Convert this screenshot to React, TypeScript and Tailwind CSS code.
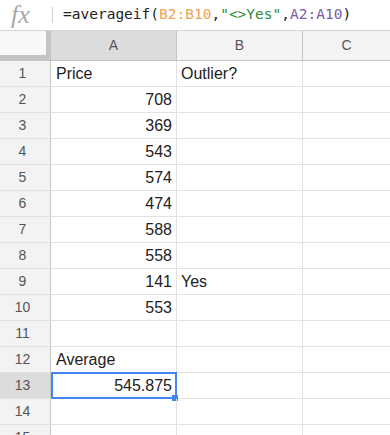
import React from "react";

const rows: { n: number; a?: string; aRight?: boolean; b?: string }[] = [
  { n: 1, a: "Price", b: "Outlier?" },
  { n: 2, a: "708", aRight: true },
  { n: 3, a: "369", aRight: true },
  { n: 4, a: "543", aRight: true },
  { n: 5, a: "574", aRight: true },
  { n: 6, a: "474", aRight: true },
  { n: 7, a: "588", aRight: true },
  { n: 8, a: "558", aRight: true },
  { n: 9, a: "141", aRight: true, b: "Yes" },
  { n: 10, a: "553", aRight: true },
  { n: 11 },
  { n: 12, a: "Average" },
  { n: 13, a: "545.875", aRight: true },
  { n: 14 },
  { n: 15 },
];

export default function App() {
  return (
    <div className="w-[390px] h-[435px] overflow-hidden bg-white font-['Liberation_Sans',Arial,sans-serif] text-[#222]">
      {/* Formula bar */}
      <div className="flex h-[31px] items-center border-b border-[#d4d4d4] bg-white">
        <div className="flex h-full w-[52px] shrink-0 items-center pl-[11px]">
          <span className="font-['Liberation_Serif',serif] text-[26px] italic leading-none text-[#a8a8a8]">
            fx
          </span>
        </div>
        <div className="h-[16px] w-px shrink-0 bg-[#cfcfcf]" />
        <div className="ml-[10px] font-['DejaVu_Sans_Mono',monospace] text-[14.5px] text-[#222] whitespace-nowrap">
          =averageif(<span className="text-[#f1a35a]">B2:B10</span>,<span className="text-[#2e8b3a]">"&lt;&gt;Yes"</span>,<span className="text-[#7e5aa8]">A2:A10</span>)
        </div>
      </div>

      {/* Column headers */}
      <div className="flex h-[30px] border-b border-[#c4c4c4] text-[14px] text-[#555]">
        <div className="w-[51px] shrink-0 border-r-[5px] border-b-[5px] border-[#c4c4c4] bg-[#f8f8f8]" />
        <div className="flex w-[126px] shrink-0 items-center justify-center border-r border-[#c4c4c4] bg-[#dcdcdc]">
          A
        </div>
        <div className="flex w-[126px] shrink-0 items-center justify-center border-r border-[#c4c4c4] bg-[#f3f3f3]">
          B
        </div>
        <div className="flex flex-1 items-center justify-center bg-[#f3f3f3]">C</div>
      </div>

      {/* Rows */}
      {rows.map((r) => (
        <div key={r.n} className="flex h-[26px] border-b border-[#e2e2e2]">
          <div
            className={`flex w-[51px] shrink-0 items-center justify-center border-r border-[#c4c4c4] pr-[5px] text-[14px] text-[#555] ${
              r.n === 13 ? "bg-[#dcdcdc]" : "bg-[#f3f3f3]"
            }`}
          >
            {r.n}
          </div>
          <div className="relative flex w-[126px] shrink-0 items-center border-r border-[#e2e2e2] text-[16px]">
            <span className={`w-full ${r.aRight ? "pr-[4px] text-right" : "pl-[5px]"}`}>{r.a}</span>
            {r.n === 13 && (
              <>
                <div className="absolute left-0 top-[-1px] h-[27px] w-[126px] border-2 border-[#4285f4]" />
                <div className="absolute right-[-2px] bottom-[-3px] h-[6px] w-[6px] bg-[#4285f4]" />
              </>
            )}
          </div>
          <div className="flex w-[126px] shrink-0 items-center border-r border-[#e2e2e2] pl-[4px] text-[16px]">
            {r.b}
          </div>
          <div className="flex-1" />
        </div>
      ))}
    </div>
  );
}
